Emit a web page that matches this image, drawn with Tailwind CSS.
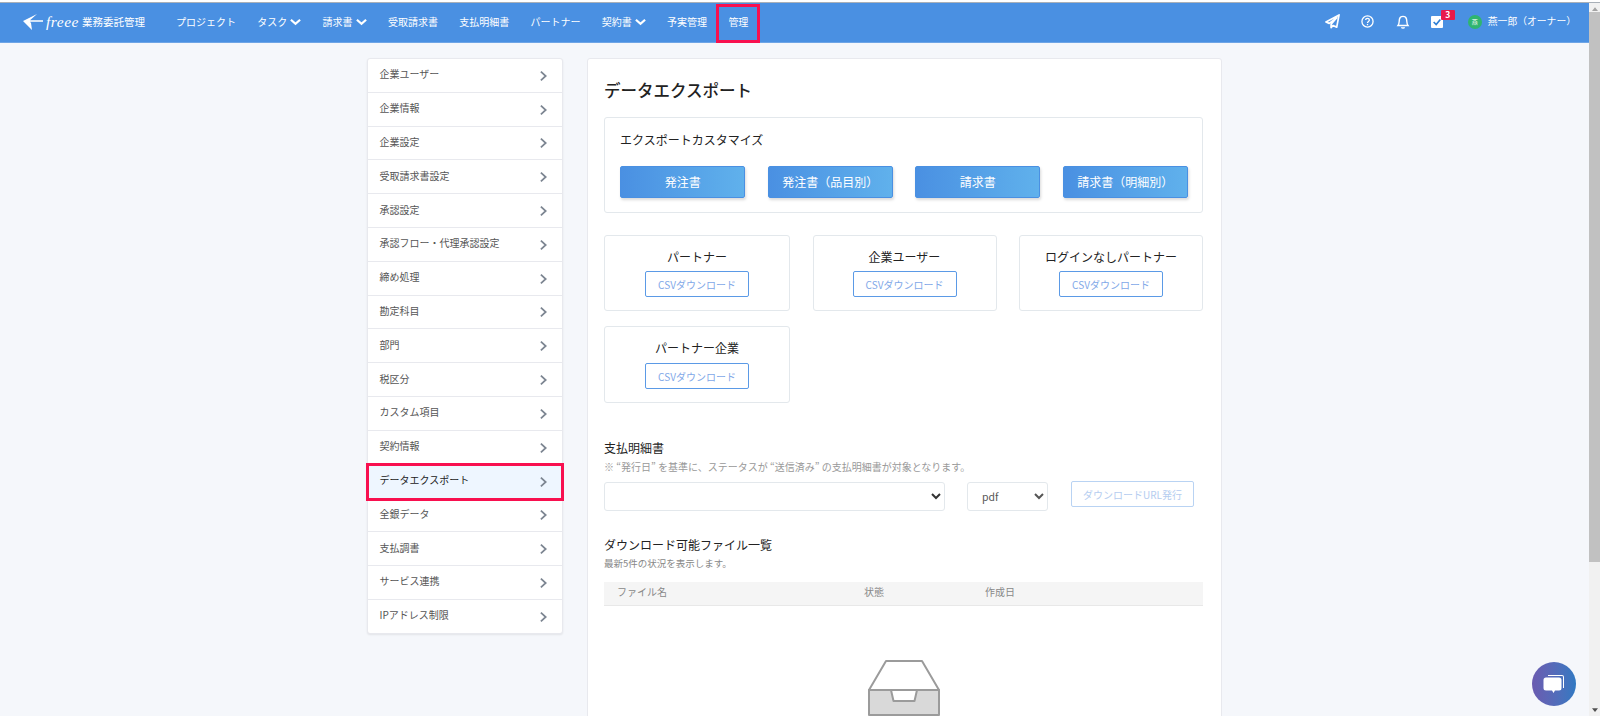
<!DOCTYPE html>
<html lang="ja">
  <head>
    <meta charset="UTF-8" />
    <meta name="viewport" content="width=device-width, initial-scale=1.0" />
    <title>データエクスポート</title>
    <script src="https://cdn.jsdelivr.net/npm/@tailwindcss/browser@4"></script>
  </head>
  <body class="h-screen overflow-hidden bg-[#f5f7fb] font-['Noto_Sans_CJK_JP','Noto_Sans',sans-serif] text-[#333]">
    <!-- top edge -->
    <div class="h-[3px] bg-white border-b border-b-[#a9b0b8]"></div>

    <div class="flex h-[713px]">
      <div class="flex-1 min-w-0 overflow-hidden">
        <!-- Header -->
        <header class="h-10 pb-[2px] bg-[#4a90e2] flex items-center text-white text-[10px] border-b border-b-[#6ea5e6]">
          <div class="ml-[23px] w-[153px] flex items-center shrink-0">
            <svg viewBox="0 0 20 20" class="w-5 h-5 shrink-0" fill="#fff">
              <path d="M0 9 L14 2 L7 8.200 H20 V9.800 H7 L8 11 L9 18 Z" />
            </svg>
            <span class="w-9 pl-[3px] font-['Liberation_Serif',serif] italic text-[15.500px] leading-none tracking-[0.5px]">freee</span>
            <span class="ml-[3px] text-[10.5px]">業務委託管理</span>
          </div>
          <nav class="flex items-center gap-[21.3px]">
            <span>プロジェクト</span>
            <span class="flex items-center gap-[3px]">タスク
              <svg viewBox="0 0 12 8" class="w-[11px] h-2" fill="none" stroke="#fff" stroke-width="2.4"><path d="M1 1.500 L6 6 L11 1.500" /></svg>
            </span>
            <span class="flex items-center gap-[3px]">請求書
              <svg viewBox="0 0 12 8" class="w-[11px] h-2" fill="none" stroke="#fff" stroke-width="2.4"><path d="M1 1.500 L6 6 L11 1.500" /></svg>
            </span>
            <span>受取請求書</span>
            <span>支払明細書</span>
            <span>パートナー</span>
            <span class="flex items-center gap-[3px]">契約書
              <svg viewBox="0 0 12 8" class="w-[11px] h-2" fill="none" stroke="#fff" stroke-width="2.4"><path d="M1 1.500 L6 6 L11 1.500" /></svg>
            </span>
            <span>予実管理</span>
            <span class="relative">管理
              <span class="absolute left-[-12px] top-[-10px] w-[44px] h-[39px] border-[3px] border-[#f8104f]"></span>
            </span>
          </nav>

          <div class="ml-auto flex items-center pr-[13px]">
            <svg viewBox="0 0 16 16" class="w-[15px] h-[15px]" fill="none" stroke="#fff" stroke-width="1.800" stroke-linejoin="round">
              <path d="M15 1 L1 8.500 L4.500 10 L12.500 4 L6.500 11 V14.500 L8.500 12.200 L12.500 14 Z" />
            </svg>
            <svg viewBox="0 0 14 14" class="ml-[21px] w-[13px] h-[13px]" fill="none" stroke="#fff" stroke-width="1.400">
              <circle cx="7" cy="7" r="6" />
              <path d="M5 5.500 C5 3 9 3 9 5.500 C9 7 7 7 7 8.600" />
              <path d="M7 9.600 V11" />
            </svg>
            <svg viewBox="0 0 14 15" class="ml-[22px] w-[14px] h-[15px]" fill="none" stroke="#fff" stroke-width="1.400">
              <path d="M2 11.500 C3.500 9.500 3 7.500 3.500 5 C4.200 1.500 9.800 1.500 10.500 5 C11 7.500 10.500 9.500 12 11.500 Z" />
              <path d="M5.500 13.200 C6 14.400 8 14.400 8.500 13.200" />
            </svg>
            <span class="relative ml-[21px] w-3 h-3 bg-white rounded-[1px] flex items-center justify-center">
              <svg viewBox="0 0 12 12" class="w-[10px] h-[10px]" fill="none" stroke="#2e7fd6" stroke-width="2"><path d="M2 6 L5 9 L10 3" /></svg>
              <span class="absolute left-[10px] top-[-6px] w-[14px] h-[10px] bg-[#e8194b] rounded-[1px] flex items-center justify-center text-[8.500px] leading-none font-bold">3</span>
            </span>
            <span class="ml-[25px] w-[14px] h-[14px] rounded-full bg-[#2fb56f] flex items-center justify-center">
              <span class="text-[6px] leading-none">燕</span>
            </span>
            <span class="ml-[6px] text-[9.800px]">燕一郎（オーナー）</span>
          </div>
        </header>

        <div class="flex items-start pl-[366.500px] pt-[15px]">
          <!-- Sidebar -->
          <aside class="relative w-[196.500px] bg-white border border-[#e8e9ee] rounded-[3px] shadow-[0_1px_2px_rgba(0,0,0,0.08)] text-[10px] text-[#555]">
            <a class="h-[33.800px] pl-3 pr-[15px] flex items-center justify-between border-b-[1.500px] border-b-[#e8e9ee]"><span class="-mt-[3px]">企業ユーザー</span><svg viewBox="0 0 8 12" class="mt-px w-[7px] h-3" fill="none" stroke="#7c8591" stroke-width="2"><path d="M1 1 L6.500 6 L1 11" /></svg></a>
            <a class="h-[33.800px] pl-3 pr-[15px] flex items-center justify-between border-b-[1.500px] border-b-[#e8e9ee]"><span class="-mt-[3px]">企業情報</span><svg viewBox="0 0 8 12" class="mt-px w-[7px] h-3" fill="none" stroke="#7c8591" stroke-width="2"><path d="M1 1 L6.500 6 L1 11" /></svg></a>
            <a class="h-[33.800px] pl-3 pr-[15px] flex items-center justify-between border-b-[1.500px] border-b-[#e8e9ee]"><span class="-mt-[3px]">企業設定</span><svg viewBox="0 0 8 12" class="mt-px w-[7px] h-3" fill="none" stroke="#7c8591" stroke-width="2"><path d="M1 1 L6.500 6 L1 11" /></svg></a>
            <a class="h-[33.800px] pl-3 pr-[15px] flex items-center justify-between border-b-[1.500px] border-b-[#e8e9ee]"><span class="-mt-[3px]">受取請求書設定</span><svg viewBox="0 0 8 12" class="mt-px w-[7px] h-3" fill="none" stroke="#7c8591" stroke-width="2"><path d="M1 1 L6.500 6 L1 11" /></svg></a>
            <a class="h-[33.800px] pl-3 pr-[15px] flex items-center justify-between border-b-[1.500px] border-b-[#e8e9ee]"><span class="-mt-[3px]">承認設定</span><svg viewBox="0 0 8 12" class="mt-px w-[7px] h-3" fill="none" stroke="#7c8591" stroke-width="2"><path d="M1 1 L6.500 6 L1 11" /></svg></a>
            <a class="h-[33.800px] pl-3 pr-[15px] flex items-center justify-between border-b-[1.500px] border-b-[#e8e9ee]"><span class="-mt-[3px]">承認フロー・代理承認設定</span><svg viewBox="0 0 8 12" class="mt-px w-[7px] h-3" fill="none" stroke="#7c8591" stroke-width="2"><path d="M1 1 L6.500 6 L1 11" /></svg></a>
            <a class="h-[33.800px] pl-3 pr-[15px] flex items-center justify-between border-b-[1.500px] border-b-[#e8e9ee]"><span class="-mt-[3px]">締め処理</span><svg viewBox="0 0 8 12" class="mt-px w-[7px] h-3" fill="none" stroke="#7c8591" stroke-width="2"><path d="M1 1 L6.500 6 L1 11" /></svg></a>
            <a class="h-[33.800px] pl-3 pr-[15px] flex items-center justify-between border-b-[1.500px] border-b-[#e8e9ee]"><span class="-mt-[3px]">勘定科目</span><svg viewBox="0 0 8 12" class="mt-px w-[7px] h-3" fill="none" stroke="#7c8591" stroke-width="2"><path d="M1 1 L6.500 6 L1 11" /></svg></a>
            <a class="h-[33.800px] pl-3 pr-[15px] flex items-center justify-between border-b-[1.500px] border-b-[#e8e9ee]"><span class="-mt-[3px]">部門</span><svg viewBox="0 0 8 12" class="mt-px w-[7px] h-3" fill="none" stroke="#7c8591" stroke-width="2"><path d="M1 1 L6.500 6 L1 11" /></svg></a>
            <a class="h-[33.800px] pl-3 pr-[15px] flex items-center justify-between border-b-[1.500px] border-b-[#e8e9ee]"><span class="-mt-[3px]">税区分</span><svg viewBox="0 0 8 12" class="mt-px w-[7px] h-3" fill="none" stroke="#7c8591" stroke-width="2"><path d="M1 1 L6.500 6 L1 11" /></svg></a>
            <a class="h-[33.800px] pl-3 pr-[15px] flex items-center justify-between border-b-[1.500px] border-b-[#e8e9ee]"><span class="-mt-[3px]">カスタム項目</span><svg viewBox="0 0 8 12" class="mt-px w-[7px] h-3" fill="none" stroke="#7c8591" stroke-width="2"><path d="M1 1 L6.500 6 L1 11" /></svg></a>
            <a class="h-[33.800px] pl-3 pr-[15px] flex items-center justify-between border-b-[1.500px] border-b-[#e8e9ee]"><span class="-mt-[3px]">契約情報</span><svg viewBox="0 0 8 12" class="mt-px w-[7px] h-3" fill="none" stroke="#7c8591" stroke-width="2"><path d="M1 1 L6.500 6 L1 11" /></svg></a>
            <!-- selected row, red frame is an annotation over it -->
            <a class="relative h-[33.800px] pl-3 pr-[15px] flex items-center justify-between bg-[#eef6ff] text-[#222]"><span class="-mt-[3px]">データエクスポート</span><svg viewBox="0 0 8 12" class="mt-px w-[7px] h-3" fill="none" stroke="#7c8591" stroke-width="2"><path d="M1 1 L6.500 6 L1 11" /></svg>
              <span class="absolute left-[-2px] top-[-2px] w-[198px] h-[38px] border-[3px] border-[#f8104f]"></span>
            </a>
            <a class="h-[33.800px] pl-3 pr-[15px] flex items-center justify-between border-b-[1.500px] border-b-[#e8e9ee]"><span class="-mt-[3px]">全銀データ</span><svg viewBox="0 0 8 12" class="mt-px w-[7px] h-3" fill="none" stroke="#7c8591" stroke-width="2"><path d="M1 1 L6.500 6 L1 11" /></svg></a>
            <a class="h-[33.800px] pl-3 pr-[15px] flex items-center justify-between border-b-[1.500px] border-b-[#e8e9ee]"><span class="-mt-[3px]">支払調書</span><svg viewBox="0 0 8 12" class="mt-px w-[7px] h-3" fill="none" stroke="#7c8591" stroke-width="2"><path d="M1 1 L6.500 6 L1 11" /></svg></a>
            <a class="h-[33.800px] pl-3 pr-[15px] flex items-center justify-between border-b-[1.500px] border-b-[#e8e9ee]"><span class="-mt-[3px]">サービス連携</span><svg viewBox="0 0 8 12" class="mt-px w-[7px] h-3" fill="none" stroke="#7c8591" stroke-width="2"><path d="M1 1 L6.500 6 L1 11" /></svg></a>
            <a class="h-[33.300px] pl-3 pr-[15px] flex items-center justify-between"><span class="-mt-[3px]">IPアドレス制限</span><svg viewBox="0 0 8 12" class="mt-px w-[7px] h-3" fill="none" stroke="#7c8591" stroke-width="2"><path d="M1 1 L6.500 6 L1 11" /></svg></a>
          </aside>

          <!-- Main card -->
          <main class="ml-[23.500px] w-[635.500px] h-[700px] shrink-0 bg-white border border-[#e8e9ee] rounded-[3px] pt-[19px] pl-[16.500px] pr-[18px]">
            <h1 class="text-[16.500px] leading-6 font-medium text-[#222]">データエクスポート</h1>

            <section class="mt-[15px] h-[96px] border border-[#e3e8ec] rounded-[3px] pt-[14px] pl-[15px] pr-[14px]">
              <h2 class="text-[12px] leading-4 text-[#222]">エクスポートカスタマイズ</h2>
              <div class="mt-[18px] grid grid-cols-4 gap-[22.3px]">
                <button class="h-8 rounded-[2px] border border-[#4a90e2] bg-gradient-to-r from-[#4a90e2] to-[#60b1ec] shadow-[1px_2px_3px_rgba(0,0,0,0.15)] text-white text-[12px]">発注書</button>
                <button class="h-8 rounded-[2px] border border-[#4a90e2] bg-gradient-to-r from-[#4a90e2] to-[#60b1ec] shadow-[1px_2px_3px_rgba(0,0,0,0.15)] text-white text-[12px]">発注書（品目別）</button>
                <button class="h-8 rounded-[2px] border border-[#4a90e2] bg-gradient-to-r from-[#4a90e2] to-[#60b1ec] shadow-[1px_2px_3px_rgba(0,0,0,0.15)] text-white text-[12px]">請求書</button>
                <button class="h-8 rounded-[2px] border border-[#4a90e2] bg-gradient-to-r from-[#4a90e2] to-[#60b1ec] shadow-[1px_2px_3px_rgba(0,0,0,0.15)] text-white text-[12px]">請求書（明細別）</button>
              </div>
            </section>

            <section class="mt-[22px] grid grid-cols-[186px_184px_184px] gap-x-[22.5px] gap-y-[15px]">
              <div class="h-[76px] border border-[#e3e8ec] rounded-[3px] flex flex-col items-center pt-[13px]">
                <h3 class="text-[12px] leading-4 text-[#222]">パートナー</h3>
                <button class="mt-[6px] w-[104px] h-[26px] border border-[#5b9ae6] rounded-[2px] text-[10px] text-[#7fa8e8]">CSVダウンロード</button>
              </div>
              <div class="h-[76px] border border-[#e3e8ec] rounded-[3px] flex flex-col items-center pt-[13px]">
                <h3 class="text-[12px] leading-4 text-[#222]">企業ユーザー</h3>
                <button class="mt-[6px] w-[104px] h-[26px] border border-[#5b9ae6] rounded-[2px] text-[10px] text-[#7fa8e8]">CSVダウンロード</button>
              </div>
              <div class="h-[76px] border border-[#e3e8ec] rounded-[3px] flex flex-col items-center pt-[13px]">
                <h3 class="text-[12px] leading-4 text-[#222]">ログインなしパートナー</h3>
                <button class="mt-[6px] w-[104px] h-[26px] border border-[#5b9ae6] rounded-[2px] text-[10px] text-[#7fa8e8]">CSVダウンロード</button>
              </div>
              <div class="h-[77px] border border-[#e3e8ec] rounded-[3px] flex flex-col items-center pt-[13px]">
                <h3 class="text-[12px] leading-4 text-[#222]">パートナー企業</h3>
                <button class="mt-[7px] w-[104px] h-[26px] border border-[#5b9ae6] rounded-[2px] text-[10px] text-[#7fa8e8]">CSVダウンロード</button>
              </div>
            </section>

            <section class="mt-[37px]">
              <h2 class="text-[12px] leading-4 text-[#222]">支払明細書</h2>
              <p class="mt-1 text-[10px] leading-[14px] text-[#999]">※ “発行日” を基準に、ステータスが “送信済み” の支払明細書が対象となります。</p>
              <div class="mt-2 flex items-start">
                <select class="w-[341px] h-[29px] bg-white border border-[#e3e8ec] rounded-[3px] text-[11px]"><option></option></select>
                <select class="ml-[22px] w-[81px] h-[29px] bg-white border border-[#e3e8ec] rounded-[3px] text-[10.500px] pl-[10px] text-[#555]"><option>pdf</option></select>
                <button class="ml-[23px] w-[123px] h-[26px] -mt-px border border-[#b9d3f3] rounded-[2px] text-[10px] text-[#b5cdf0]">ダウンロードURL発行</button>
              </div>
            </section>

            <section class="mt-[26px]">
              <h2 class="text-[12px] leading-4 text-[#222]">ダウンロード可能ファイル一覧</h2>
              <p class="mt-[3px] text-[9.500px] leading-[14px] text-[#888]">最新5件の状況を表示します。</p>
              <div class="mt-3 h-6 pb-1 bg-[#f5f5f5] border-b border-b-[#e8e8e8] flex items-center text-[10px] text-[#888]">
                <span class="w-[260px] pl-[13px]">ファイル名</span>
                <span class="w-[121px]">状態</span>
                <span>作成日</span>
              </div>
            </section>

            <div class="mt-[54px] flex justify-center">
              <svg viewBox="0 0 72 56" class="w-[72px] h-14" stroke="#9b9b9b" stroke-width="2" stroke-linejoin="round">
                <path d="M18 1 H54 L71 30 H1 Z" fill="#fff" />
                <path d="M1 30 H23 L25.500 41 H46.500 L49 30 H71 V55 H1 Z" fill="#d9d9d9" />
              </svg>
            </div>
          </main>
        </div>
      </div>

      <!-- Scrollbar -->
      <div class="relative w-[11px] shrink-0 bg-[#f1f1f1] flex flex-col items-center">
        <svg viewBox="0 0 8 5" class="mt-[4px] w-[6px] h-1" fill="#a3a3a3"><path d="M4 0 L8 5 H0 Z" /></svg>
        <div class="mt-[1px] w-full h-[550px] bg-[#c1c1c1]"></div>
        <svg viewBox="0 0 8 5" class="mt-auto mb-[4px] w-[6px] h-1" fill="#505050"><path d="M0 0 H8 L4 5 Z" /></svg>
      </div>
    </div>

    <!-- Chat button -->
    <button class="fixed left-[1532px] top-[662px] w-11 h-11 rounded-full bg-gradient-to-r from-[#6a5bb0] to-[#2f79c2] flex items-center justify-center">
      <svg viewBox="0 0 24 24" class="w-6 h-6" fill="#fff">
        <path d="M6 3 H20 A2 2 0 0 1 22 5 V16 H21 V5 A1 1 0 0 0 20 4 H6 Z" />
        <path d="M4 5.500 H17 A2.500 2.500 0 0 1 19.500 8 V16 A2.500 2.500 0 0 1 17 18.500 H13 L11.500 21 L10 18.500 H4 A2.500 2.500 0 0 1 1.500 16 V8 A2.500 2.500 0 0 1 4 5.500 Z" />
      </svg>
    </button>
  </body>
</html>
